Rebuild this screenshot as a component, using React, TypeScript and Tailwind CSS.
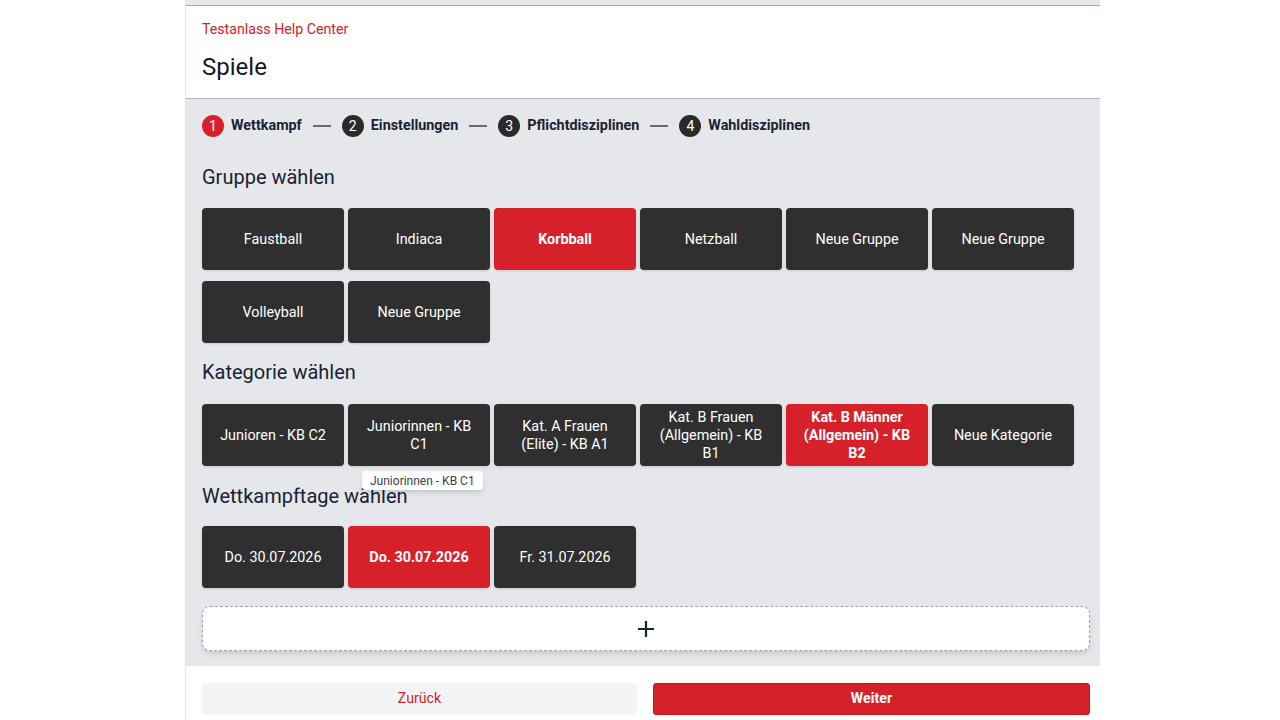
import React from "react";

const font = { fontFamily: "Roboto, 'Noto Sans', Arial, sans-serif" };

function Tile({ label, active, children }: { label?: string; active?: boolean; children?: React.ReactNode }) {
  return (
    <div
      className={
        "relative w-[142px] h-[62px] rounded-[4px] flex items-center justify-center text-center px-3 pt-[2px] text-[14.35px] leading-[18px] text-white shadow-sm " +
        (active ? "bg-[#d7212a] font-bold" : "bg-[#2f2f2f]")
      }
    >
      <span>{label}</span>
      {children}
    </div>
  );
}

function Step({ n, label, active }: { n: number; label: string; active?: boolean }) {
  return (
    <div className="flex items-center gap-[7px]">
      <div
        className={
          "w-[22px] h-[22px] rounded-full flex items-center justify-center text-white text-[14px] " +
          (active ? "bg-[#d7212a]" : "bg-[#2a2a2a]")
        }
      >
        {n}
      </div>
      <span className="text-[14.35px] font-bold text-[#1a2233]">{label}</span>
    </div>
  );
}

function Dash() {
  return <div className="w-[18px] h-[1.5px] bg-[#6b6b6b]" />;
}

export default function App() {
  return (
    <div className="w-[1280px] h-[720px] bg-white overflow-hidden flex" style={font}>
      <div className="w-[915px] h-full flex flex-col border-l border-[#e5e7eb] ml-[185px]">
        <div className="h-[5px] bg-[#e7e8ec] border-b border-[#a3a6ad] box-content" />
        <div className="bg-white pl-4 pt-[13px] pb-[15px] border-b border-[#b5b8be]">
          <div className="text-[14.2px] leading-5 text-[#d7212a]">Testanlass Help Center</div>
          <div className="mt-3 text-[24px] leading-8 text-[#111827]">Spiele</div>
        </div>
        <div className="bg-[#e5e7eb] pl-4 pr-[10px] pt-[16px] pb-[15px] flex flex-col">
          <div className="flex items-center gap-[11px]">
            <Step n={1} label="Wettkampf" active />
            <Dash />
            <Step n={2} label="Einstellungen" />
            <Dash />
            <Step n={3} label="Pflichtdisziplinen" />
            <Dash />
            <Step n={4} label="Wahldisziplinen" />
          </div>

          <div className="mt-[26px] text-[20px] leading-7 text-[#1a2233]">Gruppe wählen</div>
          <div className="mt-[17px] flex flex-wrap gap-x-1 gap-y-[11px]">
            <Tile label="Faustball" />
            <Tile label="Indiaca" />
            <Tile label="Korbball" active />
            <Tile label="Netzball" />
            <Tile label="Neue Gruppe" />
            <Tile label="Neue Gruppe" />
            <Tile label="Volleyball" />
            <Tile label="Neue Gruppe" />
          </div>

          <div className="mt-[15px] text-[20px] leading-7 text-[#1a2233]">Kategorie wählen</div>
          <div className="mt-[18px] flex flex-wrap gap-x-1 gap-y-[11px]">
            <Tile label="Junioren - KB C2" />
            <Tile label="Juniorinnen - KB C1">
              <div className="absolute left-[14px] top-[67px] z-10 bg-white rounded-[4px] shadow-md px-2 h-[19px] flex items-center text-[12px] font-normal text-[#374151] whitespace-nowrap">
                Juniorinnen - KB C1
              </div>
            </Tile>
            <Tile label="Kat. A Frauen (Elite) - KB A1" />
            <Tile label="Kat. B Frauen (Allgemein) - KB B1" />
            <Tile label="Kat. B Männer (Allgemein) - KB B2" active />
            <Tile label="Neue Kategorie" />
          </div>

          <div className="mt-4 text-[20px] leading-7 text-[#1a2233]">Wettkampftage wählen</div>
          <div className="mt-4 flex flex-wrap gap-x-1 gap-y-[11px]">
            <Tile label="Do. 30.07.2026" />
            <Tile label="Do. 30.07.2026" active />
            <Tile label="Fr. 31.07.2026" />
          </div>

          <div className="mt-[18px] h-[45px] bg-white rounded-lg border border-dashed border-[#a0a3a8] shadow-md flex items-center justify-center">
            <svg width="20" height="20" viewBox="0 0 20 20" className="text-[#1a2233]">
              <path d="M10 2v16M2 10h16" stroke="currentColor" strokeWidth="2.2" />
            </svg>
          </div>
        </div>
        <div className="bg-white pl-4 pr-[10px] pt-[17px] flex gap-4 flex-1">
          <button className="flex-1 h-[32px] rounded-[3px] bg-[#f3f4f6] text-[#d7212a] text-[14.2px]">Zurück</button>
          <button className="flex-1 h-[32px] rounded-[3px] bg-[#d7212a] border border-[#b91c1c] text-white font-bold text-[14.2px]">Weiter</button>
        </div>
      </div>
    </div>
  );
}
